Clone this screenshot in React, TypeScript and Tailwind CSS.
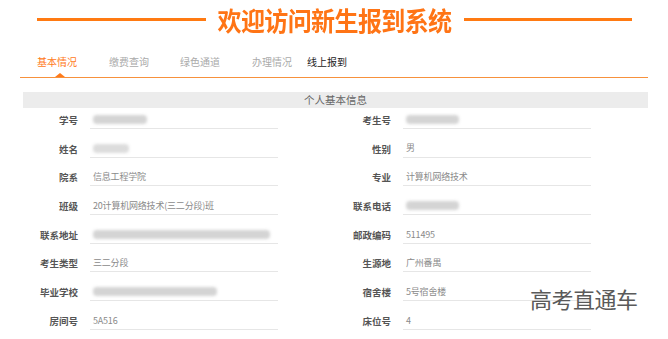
import React from 'react';

type Cell = { label: string; value?: string; blur?: number; blurTone?: string };

const rows: [Cell, Cell][] = [
  [{ label: '学号', blur: 54 }, { label: '考生号', blur: 53 }],
  [{ label: '姓名', blur: 36, blurTone: 'bg-[#dcdcdc]' }, { label: '性别', value: '男' }],
  [{ label: '院系', value: '信息工程学院' }, { label: '专业', value: '计算机网络技术' }],
  [{ label: '班级', value: '20计算机网络技术(三二分段)班' }, { label: '联系电话', blur: 53 }],
  [{ label: '联系地址', blur: 177 }, { label: '邮政编码', value: '511495' }],
  [{ label: '考生类型', value: '三二分段' }, { label: '生源地', value: '广州番禺' }],
  [{ label: '毕业学校', blur: 124 }, { label: '宿舍楼', value: '5号宿舍楼' }],
  [{ label: '房间号', value: '5A516' }, { label: '床位号', value: '4' }],
];

const tabs = [
  { name: '基本情况', cls: 'w-[72px] text-[#ff7a1a]' },
  { name: '缴费查询', cls: 'w-[71px] text-[#aaaaaa]' },
  { name: '绿色通道', cls: 'w-[72px] text-[#aaaaaa]' },
  { name: '办理情况', cls: 'w-[55px] text-[#aaaaaa]' },
  { name: '线上报到', cls: 'w-[72px] text-[#222222]' },
];

const Field: React.FC<{ cell: Cell }> = ({ cell }) => (
  <div className="flex h-[21px]">
    <div className="w-[56px] flex items-center justify-end pt-[3px] text-[9.5px] font-semibold text-[#555] whitespace-nowrap">
      {cell.label}
    </div>
    <div className="ml-[12px] w-[188px] flex items-center pt-[3px] pl-[3px] border-b border-[#e6e6e6] text-[9px] text-[#8a8a8a] whitespace-nowrap tracking-[-0.2px]">
      {cell.value}
      {cell.blur && (
        <div
          className={`h-[9px] rounded-sm blur-[1.5px] ${cell.blurTone ?? 'bg-[#d4d4d4]'}`}
          style={{ width: cell.blur }}
        />
      )}
    </div>
  </div>
);

export default function App() {
  return (
    <div
      className="relative w-[668px] h-[339px] bg-white overflow-hidden"
      style={{ fontFamily: '"Noto Sans CJK SC", "Noto Sans", sans-serif' }}
    >
      {/* title */}
      <div className="h-[40px] flex items-center justify-center">
        <div className="w-[169px] h-[3px] bg-[#ff7a12] mt-[-2px]" />
        <div className="mx-[12px] text-[24px] leading-[28px] font-bold text-[#ff7415] scale-y-110 tracking-[-0.6px]">
          欢迎访问新生报到系统
        </div>
        <div className="w-[168px] h-[3px] bg-[#ff7a12] mt-[-2px]" />
      </div>

      {/* tabs */}
      <div className="relative mx-[20px] h-[38px] border-b border-[#f7913c] flex pl-[17px] pt-[15px]">
        {tabs.map((t) => (
          <div key={t.name} className={`${t.cls} text-[10px] leading-[14px]`}>
            {t.name}
          </div>
        ))}
        <div className="absolute left-[35px] bottom-0 w-0 h-0 border-l-[5px] border-r-[5px] border-b-[4px] border-l-transparent border-r-transparent border-b-[#ff7a1a]" />
      </div>

      {/* section header */}
      <div className="mt-[14px] ml-[23px] mr-[20px] h-[16px] bg-[#ececec] flex items-center justify-center text-[10.5px] text-[#666]">
        个人基本信息
      </div>

      <div className="ml-[22px] w-[626px] grid grid-cols-2 gap-y-[7.7px]">
        {rows.map(([l, r], i) => (
          <React.Fragment key={i}>
            <Field cell={l} />
            <Field cell={r} />
          </React.Fragment>
        ))}
      </div>

      {/* watermark */}
      <div className="absolute left-[530px] top-[284px] text-[22px] leading-[28px] text-[#5a5a5a] tracking-[-0.5px]">
        高考直通车
      </div>
    </div>
  );
}
